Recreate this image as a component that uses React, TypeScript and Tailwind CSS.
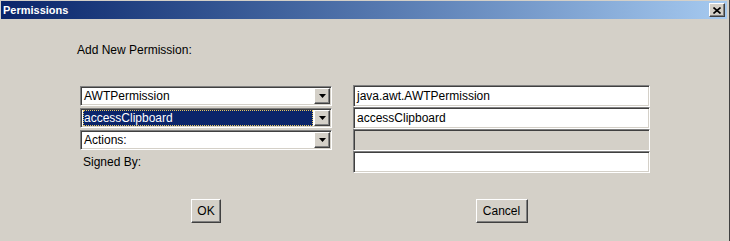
const sunken =
  "border border-t-[#808080] border-l-[#808080] border-b-white border-r-white shadow-[inset_1px_1px_0_#404040,inset_-1px_-1px_0_#d4d0c8]";
const raised =
  "border border-t-white border-l-white border-b-[#404040] border-r-[#404040] shadow-[inset_-1px_-1px_0_#808080,inset_1px_1px_0_#d4d0c8]";

function Arrow() {
  return (
    <svg width="7" height="4" viewBox="0 0 7 4">
      <path d="M0 0h7L3.5 4z" fill="#000" />
    </svg>
  );
}

interface ComboProps {
  value: string;
  selected?: boolean;
}

function Combo({ value, selected }: ComboProps) {
  return (
    <div className={`flex h-[20px] bg-white ${sunken} p-[1px]`}>
      <div className="flex flex-1 items-center min-w-0 px-[1px]">
        {selected ? (
          <div className="flex h-[16px] flex-1 items-center bg-[#0a246a] pl-[1px] text-white outline-1 outline-dotted outline-[#e8c860] -outline-offset-1">
            {value}
          </div>
        ) : (
          <span className="pl-[1px]">{value}</span>
        )}
      </div>
      <div className={`flex w-[16px] items-center justify-center bg-[#d4d0c8] ${raised}`}>
        <Arrow />
      </div>
    </div>
  );
}

function Field({ value, disabled }: { value?: string; disabled?: boolean }) {
  return (
    <div
      className={`flex h-[22px] items-center px-[3px] ${sunken} ${disabled ? "bg-[#d4d0c8]" : "bg-white"}`}
    >
      {value}
    </div>
  );
}

export default function App() {
  return (
    <div
      className="flex h-[241px] w-[730px] flex-col bg-[#d4d0c8] pl-px pr-[2px] pt-px text-[12px] leading-[14px] text-black border-r border-r-[#404040]"
      style={{ fontFamily: '"Liberation Sans", Arial, sans-serif' }}
    >
      <div className="flex h-[18px] items-center justify-between bg-linear-to-r from-[#0a246a] to-[#a6caf0] pl-[2px] pr-[2px]">
        <span className="text-[11px] font-bold text-white">Permissions</span>
        <div className={`flex h-[14px] w-[16px] items-center justify-center bg-[#d4d0c8] ${raised}`}>
          <svg width="8" height="7" viewBox="0 0 8 7">
            <path d="M0.5 0.5l7 6M7.5 0.5l-7 6" stroke="#000" strokeWidth="1.6" />
          </svg>
        </div>
      </div>

      <div className="mt-[24px] pl-[76px]">Add New Permission:</div>

      <div className="mt-[28px] grid grid-cols-[252px_297px] gap-x-[21px] pl-[79px]">
        <div className="flex flex-col">
          <div className="flex h-[22px] flex-col justify-center">
            <Combo value="AWTPermission" />
          </div>
          <div className="flex h-[22px] flex-col justify-center">
            <Combo value="accessClipboard" selected />
          </div>
          <div className="flex h-[22px] flex-col justify-center">
            <Combo value="Actions:" />
          </div>
          <div className="flex h-[22px] items-center pl-[3px]">Signed By:</div>
          <div className="mt-[26px] flex justify-center">
            <button className={`h-[24px] w-[30px] bg-[#d4d0c8] ${raised}`}>OK</button>
          </div>
        </div>
        <div className="flex flex-col">
          <Field value="java.awt.AWTPermission" />
          <Field value="accessClipboard" />
          <Field disabled />
          <Field />
          <div className="mt-[26px] flex justify-center">
            <button className={`h-[24px] w-[52px] bg-[#d4d0c8] ${raised}`}>Cancel</button>
          </div>
        </div>
      </div>
    </div>
  );
}
